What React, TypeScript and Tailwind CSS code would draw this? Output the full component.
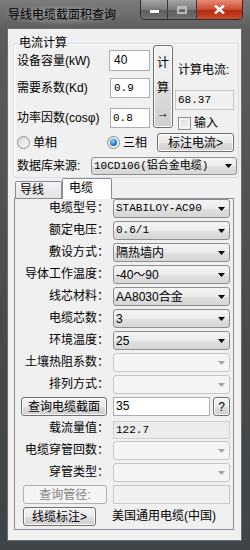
import React from "react";

const MONO = "font-['Liberation_Mono','Noto_Sans_CJK_SC',monospace] text-[11px]";
const BTN =
  "flex items-center justify-center rounded-[3px] border border-[#707070] bg-[linear-gradient(#f2f2f2,#ebebeb_50%,#dddddd_51%,#cfcfcf)] shadow-[inset_0_0_0_1px_#fcfcfc]";
const BTN_OFF =
  "flex items-center justify-center rounded-[3px] border border-[#adb2b5] bg-[#f4f4f4] text-[#838383]";

function Arrow({ off }: { off?: boolean }) {
  return (
    <svg width="7" height="4" className="mr-[4px] shrink-0">
      <polygon points="0,0 7,0 3.5,4" fill={off ? "#a3a3a3" : "#000"} />
    </svg>
  );
}

function Combo({
  value,
  off,
  mono,
  w = "w-[117px]",
  h = "h-[19px]",
}: {
  value?: string;
  off?: boolean;
  mono?: boolean;
  w?: string;
  h?: string;
}) {
  return (
    <div
      className={`${w} ${h} flex items-center rounded-[3px] border ${
        off
          ? "border-[#c3c6ca] bg-[#f4f4f4]"
          : "border-[#8e8f8f] bg-[linear-gradient(#f4f4f4,#ececec_50%,#e0e0e0_51%,#d6d6d6)]"
      }`}
    >
      <span className={`flex-1 pl-[2px] whitespace-nowrap overflow-hidden ${mono ? MONO : ""}`}>
        {value}
      </span>
      <Arrow off={off} />
    </div>
  );
}

function Label({ children }: { children: React.ReactNode }) {
  return <div className="w-[94px] text-right leading-[19px] whitespace-nowrap">{children}</div>;
}

function Row({ children }: { children: React.ReactNode }) {
  return <div className="flex items-start h-[22px]">{children}</div>;
}

function Radio({ on }: { on?: boolean }) {
  return (
    <div className="w-[13px] h-[13px] rounded-full border border-[#8e8f8f] bg-[linear-gradient(135deg,#d8d8d8,#fafafa)] flex items-center justify-center">
      {on && <div className="w-[7px] h-[7px] rounded-full bg-[radial-gradient(circle_at_40%_35%,#8fd0ff,#1b73c9_60%,#0a4f9e)]" />}
    </div>
  );
}

export default function App() {
  return (
    <div className="w-[250px] h-[550px] bg-[linear-gradient(#7d7d7d,#5c5c5c_30px,#4a4a4a_60%,#3e4448)] font-['Liberation_Sans','Noto_Sans_CJK_SC',sans-serif] text-[12px] text-black">
      {/* title bar */}
      <div className="h-[28px] flex items-start">
        <div className="ml-[4px] mt-[5px] px-[4px] py-[2px] leading-[16px] text-black rounded-[8px] bg-[radial-gradient(ellipse_at_center,rgba(200,200,200,0.55),rgba(200,200,200,0)_75%)]">
          导线电缆截面积查询
        </div>
        <div className="ml-auto mr-[7px] flex h-[20px] border border-t-0 border-[#2e2e2e] rounded-b-[5px] overflow-hidden">
          <div className="w-[27px] flex items-center justify-center bg-[linear-gradient(#a3a3a3,#7c7c7c_50%,#5d5d5d_51%,#707070)] border-r border-[#3a3a3a]">
            <div className="w-[9px] h-[3px] bg-white mt-[4px] shadow-[0_0_1px_#222]" />
          </div>
          <div className="w-[29px] flex items-center justify-center bg-[linear-gradient(#a3a3a3,#7c7c7c_50%,#5d5d5d_51%,#707070)] border-r border-[#3a3a3a]">
            <div className="w-[10px] h-[8px] border-2 border-t-[3px] border-[#b9b9b9]" />
          </div>
          <div className="w-[45px] flex items-center justify-center bg-[linear-gradient(#e68a74,#cc4a30_50%,#b3280f_51%,#c94a2c)]">
            <svg width="11" height="9" viewBox="0 0 11 9">
              <path d="M1 0.5 L10 8.5 M10 0.5 L1 8.5" stroke="#fff" strokeWidth="2.4" />
            </svg>
          </div>
        </div>
      </div>

      {/* client area */}
      <div className="ml-[7px] w-[235px] h-[513px] bg-[#f0f0f0] border border-[#6e6e6e]">
        {/* group box */}
        <div className="ml-[5px] mt-[14px] w-[226px] h-[135px] border border-[#d5dfe5] rounded-[3px] shadow-[inset_1px_1px_0_#ffffff]">
          <div className="ml-[4px] -mt-[9px] -mb-[7px] h-[16px] leading-[16px] w-fit px-[1px] bg-[#f0f0f0]">电流计算</div>
          <div className="flex items-start">
            <div className="w-[136px] pl-[3px]">
              <div className="mt-[6px] h-[21px] flex items-center justify-between">
                <span>设备容量(kW)</span>
                <div className="w-[41px] h-[21px] bg-white border border-[#abadb3] pl-[4px] leading-[19px]">40</div>
              </div>
              <div className="mt-[7px] h-[20px] flex items-center justify-between">
                <span>需要系数(Kd)</span>
                <div className={`w-[40px] h-[20px] bg-white border border-[#abadb3] pl-[3px] leading-[18px] ${MONO}`}>0.9</div>
              </div>
              <div className="mt-[10px] h-[20px] flex items-center justify-between">
                <span className="whitespace-nowrap">功率因数(cosφ)</span>
                <div className={`w-[40px] h-[20px] bg-white border border-[#abadb3] pl-[2px] leading-[18px] ${MONO}`}>0.8</div>
              </div>
            </div>
            <div className={`ml-[3px] mt-[1px] w-[20px] h-[83px] flex-col gap-[7px] pt-[8px] ${BTN} justify-start`}>
              <span className="leading-[18px]">计</span>
              <span className="leading-[18px]">算</span>
              <span className="leading-[18px]">→</span>
            </div>
            <div className="ml-[2px] flex flex-col">
              <div className="mt-[18px] pl-[3px] leading-[16px]">计算电流:</div>
              <div className={`mt-[12px] w-[59px] h-[20px] bg-[#f0f0f0] border border-[#c8c8c8] pl-[2px] leading-[18px] ${MONO}`}>68.37</div>
              <div className="mt-[6px] pl-[3px] h-[14px] flex items-center gap-[3px]">
                <div className="w-[13px] h-[13px] border border-[#8e8f8f] bg-[linear-gradient(135deg,#d5d5d5,#f7f7f7)] shadow-[inset_0_0_0_2px_#f4f4f4]" />
                <span className="leading-[14px]">输入</span>
              </div>
            </div>
          </div>
          <div className="mt-[3px] h-[19px] pl-[3px] flex items-center">
            <div className="w-[90px] flex items-center gap-[3px]">
              <Radio />
              <span>单相</span>
            </div>
            <div className="w-[50px] flex items-center gap-[3px]">
              <Radio on />
              <span>三相</span>
            </div>
            <div className={`w-[77px] h-[19px] ${BTN}`}>标注电流&gt;</div>
          </div>
          <div className="mt-[5px] h-[18px] pl-[3px] flex items-center">
            <div className="w-[74px] whitespace-nowrap">数据库来源:</div>
            <Combo value="10CD106(铝合金电缆)" mono w="w-[146px]" h="h-[18px]" />
          </div>
        </div>

        {/* tabs */}
        <div className="h-[20px] flex items-end ml-[7px]">
          <div className="w-[47px] h-[17px] border border-b-0 border-[#898c95] rounded-t-[2px] bg-[linear-gradient(#f2f2f2,#e4e4e4)] pl-[4px] leading-[17px]">
            导线
          </div>
          <div className="relative z-10 -mb-[1px] w-[50px] h-[21px] border border-b-0 border-[#898c95] rounded-t-[2px] bg-white pl-[6px] leading-[19px]">
            电缆
          </div>
        </div>
        <div className="ml-[6px] w-[220px] h-[332px] border border-[#898c95] bg-[#f0f0f0]">
          <Row>
            <Label>电缆型号：</Label>
            <div className="ml-[4px]"><Combo value="STABILOY-AC90" mono /></div>
          </Row>
          <Row>
            <Label>额定电压：</Label>
            <div className="ml-[4px]"><Combo value="0.6/1" mono /></div>
          </Row>
          <Row>
            <Label>敷设方式：</Label>
            <div className="ml-[4px]"><Combo value="隔热墙内" /></div>
          </Row>
          <Row>
            <Label>导体工作温度：</Label>
            <div className="ml-[4px]"><Combo value="-40～90" /></div>
          </Row>
          <Row>
            <Label>线芯材料：</Label>
            <div className="ml-[4px]"><Combo value="AA8030合金" /></div>
          </Row>
          <Row>
            <Label>电缆芯数：</Label>
            <div className="ml-[4px]"><Combo value="3" /></div>
          </Row>
          <Row>
            <Label>环境温度：</Label>
            <div className="ml-[4px]"><Combo value="25" /></div>
          </Row>
          <Row>
            <Label>土壤热阻系数：</Label>
            <div className="ml-[4px]"><Combo off /></div>
          </Row>
          <Row>
            <Label>排列方式：</Label>
            <div className="ml-[4px]"><Combo off /></div>
          </Row>
          <Row>
            <div className={`ml-[6px] w-[86px] h-[19px] ${BTN}`}>查询电缆截面</div>
            <div className="ml-[6px] w-[97px] h-[19px] bg-white border border-[#abadb3] pl-[2px] leading-[17px]">35</div>
            <div className={`ml-[3px] w-[17px] h-[19px] ${BTN}`}>?</div>
          </Row>
          <Row>
            <Label>载流量值：</Label>
            <div className={`ml-[4px] mt-[2px] w-[117px] h-[18px] bg-[#ececec] border border-[#d0d0d0] pl-[2px] leading-[16px] ${MONO}`}>122.7</div>
          </Row>
          <Row>
            <Label>电缆穿管回数：</Label>
            <div className="ml-[4px]"><Combo off /></div>
          </Row>
          <Row>
            <Label>穿管类型：</Label>
            <div className="ml-[4px]"><Combo off /></div>
          </Row>
          <Row>
            <div className={`ml-[8px] w-[84px] h-[19px] ${BTN_OFF}`}>查询管径:</div>
            <div className="ml-[6px] w-[117px] h-[19px] bg-[#f0f0f0] border border-[#c8c8c8]" />
          </Row>
          <Row>
            <div className={`ml-[8px] w-[73px] h-[19px] ${BTN}`}>线缆标注&gt;</div>
            <div className="ml-[16px] leading-[19px] whitespace-nowrap">美国通用电缆(中国)</div>
          </Row>
        </div>
      </div>
    </div>
  );
}
